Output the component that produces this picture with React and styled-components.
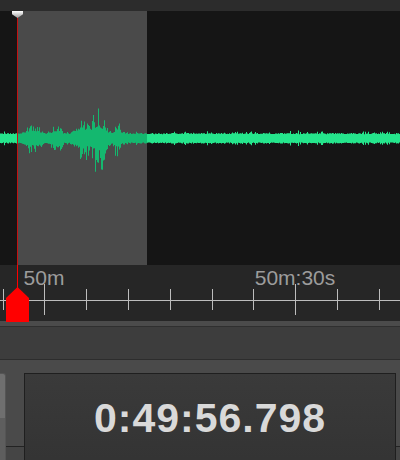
import React from 'react';
import styled, { createGlobalStyle } from 'styled-components';

const GlobalStyle = createGlobalStyle`
  body {
    margin: 0;
    background: #2b2b2b;
    font-family: "Liberation Sans", Arial, sans-serif;
  }
`;

const SEL_START = 17;
const SEL_END = 147;
const CENTER = 127;

// little deterministic noise so the wave looks the same every render
function makeRand(seed) {
    let s = seed;
    return () => {
        s = (s * 1103515245 + 12345) % 2147483648;
        return s / 2147483648;
    };
}

const bursts = [
    { at: 33, width: 8, amp: 9 },
    { at: 56, width: 6, amp: 8 },
    { at: 80, width: 6, amp: 12 },
    { at: 98, width: 7, amp: 28 },
    { at: 90, width: 12, amp: 14 },
    { at: 117, width: 3, amp: 16 },
];

function buildWave() {
    const rand = makeRand(7);
    const bars = [];
    for (let x = 0; x < 400; x++) {
        let env = 0;
        bursts.forEach(b => {
            const d = (x - b.at) / b.width;
            env = Math.max(env, b.amp * Math.exp(-d * d));
        });
        const base = 3.8 + rand() * 1.2;
        const spike = rand() > 0.85 ? rand() * 2.5 : 0;
        const r1 = rand();
        const r2 = rand();
        const up = base + spike + env * (0.25 + r1 * r1 * 0.9);
        const down = base + 0.6 + spike + env * (0.25 + r2 * r2 * 1.1);
        bars.push({ x, up, down });
    }
    return bars;
}

const wave = buildWave();

const ticks = [2.7, 44.3, 86.2, 128, 169.8, 211.5, 253.3, 295.2, 337, 378.8];
const majors = [44.3, 295.2];

function App() {
    const inside = wave.filter(b => b.x >= SEL_START && b.x < SEL_END);
    const outside = wave.filter(b => b.x < SEL_START || b.x >= SEL_END);
    const toPath = bars => bars.map(b => `M${b.x} ${(CENTER - b.up).toFixed(1)}h1V${(CENTER + b.down).toFixed(1)}h-1Z`).join('');

    return (
        <Frame>
            <GlobalStyle />
            <TopBar />
            <WaveArea>
                <Selection style={{ left: SEL_START, width: SEL_END - SEL_START }} />
                <WaveSvg width="400" height="254" viewBox="0 0 400 254">
                    <path d={toPath(outside)} fill="#25e58c" />
                    <path d={toPath(inside)} fill="#14b86f" />
                </WaveSvg>
                <PlayLine />
                <PlayHandle />
            </WaveArea>
            <Ruler>
                <RulerSvg width="400" height="56" viewBox="0 0 400 56">
                    <line x1="0" x2="400" y1="35.5" y2="35.5" stroke="#bdbdbd" strokeWidth="1" />
                    {ticks.map(t => {
                        const major = majors.includes(t);
                        return (
                            <line key={t} x1={Math.round(t) + 0.5} x2={Math.round(t) + 0.5}
                                y1={major ? 19 : 24} y2={major ? 50 : 45}
                                stroke="#bdbdbd" strokeWidth="1" />
                        );
                    })}
                </RulerSvg>
                <TimeLabel style={{ left: 44 }}>50m</TimeLabel>
                <TimeLabel style={{ left: 295 }}>50m:30s</TimeLabel>
                <MarkerLine />
                <Marker width="24" height="35" viewBox="0 0 24 35">
                    <path d="M0 11 L11.5 0 L23 11 V35 H0 Z" fill="#ff0000" />
                </Marker>
            </Ruler>
            <ScrollStrip />
            <ControlPanel />
            <BottomBar>
                <SideButton />
                <TimeBox>
                    <TimeText>0:49:56.798</TimeText>
                </TimeBox>
            </BottomBar>
        </Frame>
    );
}

export default App;

const Frame = styled.div`
width: 400px;
height: 460px;
overflow: hidden;
display: flex;
flex-direction: column;
background: #2b2b2b;
`;

const TopBar = styled.div`
height: 11px;
flex-shrink: 0;
background: #2c2c2c;
`;

const WaveArea = styled.div`
position: relative;
height: 254px;
flex-shrink: 0;
background: #151515;
`;

const Selection = styled.div`
position: absolute;
top: 0;
bottom: 0;
background: #4a4a4a;
`;

const WaveSvg = styled.svg`
position: absolute;
left: 0;
top: 0;
display: block;
`;

const PlayLine = styled.div`
position: absolute;
left: 17px;
top: 0;
bottom: 0;
width: 1px;
background: #c41010;
`;

const PlayHandle = styled.div`
position: absolute;
left: 12px;
top: 0;
width: 11px;
height: 7px;
background: linear-gradient(#ffffff, #9a9a9a);
clip-path: polygon(0 0, 100% 0, 100% 45%, 50% 100%, 0 45%);
`;

const Ruler = styled.div`
position: relative;
height: 56px;
flex-shrink: 0;
background: #262626;
`;

const RulerSvg = styled.svg`
position: absolute;
left: 0;
top: 0;
display: block;
`;

const TimeLabel = styled.span`
position: absolute;
top: 1px;
transform: translateX(-50%);
font-size: 21px;
line-height: 24px;
color: #9c9c9c;
white-space: nowrap;
`;

const MarkerLine = styled.div`
position: absolute;
left: 17px;
top: 0;
height: 24px;
width: 1px;
background: #ff0000;
`;

const Marker = styled.svg`
position: absolute;
left: 6px;
top: 22px;
display: block;
`;

const ScrollStrip = styled.div`
height: 5px;
flex-shrink: 0;
background: #4b4b4b;
`;

const ControlPanel = styled.div`
height: 32px;
flex-shrink: 0;
background: #3d3d3d;
border-top: 1px solid #2f2f2f;
border-bottom: 1px solid #2d2d2d;
`;

const BottomBar = styled.div`
flex: 1;
display: flex;
align-items: flex-start;
padding-top: 13px;
background: linear-gradient(to bottom, #4a4a4a 0 86px, #232323 86px 87px, #454545 87px);
`;

const SideButton = styled.div`
width: 6px;
height: 100px;
flex-shrink: 0;
box-sizing: border-box;
background: linear-gradient(to bottom, #6f6f6f 0 44px, #5e5e5e 44px);
border: 1px solid #555;
border-left: none;
border-radius: 0 3px 3px 0;
`;

const TimeBox = styled.div`
margin-left: 18px;
width: 372px;
height: 100px;
flex-shrink: 0;
box-sizing: border-box;
border: 1px solid #1f1f1f;
background: linear-gradient(to bottom, #3a3a3a, #333333);
display: flex;
justify-content: center;
padding-top: 20px;
`;

const TimeText = styled.div`
font-weight: bold;
font-size: 41px;
letter-spacing: 1px;
line-height: 48px;
color: #d9d9d9;
`;
